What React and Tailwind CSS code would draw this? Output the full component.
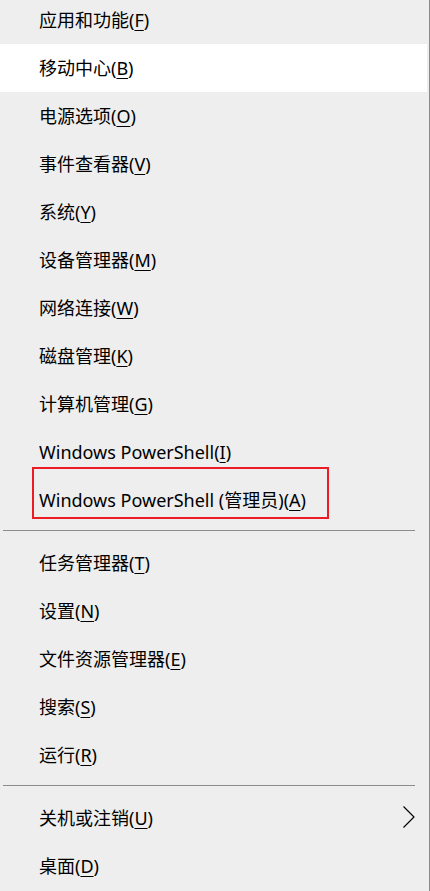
import React from "react";

const FONT = {
  fontFamily: '"Noto Sans", "Noto Sans CJK SC", sans-serif',
};

function Label({ text, k }) {
  return (
    <span>
      {text}(<span className="underline decoration-1 underline-offset-[3px]">{k}</span>)
    </span>
  );
}

function Row({ text, k, active, children }) {
  return (
    <div
      className={
        "relative flex h-[48px] items-center pl-[39px] text-[18px] leading-none text-black " +
        (active ? "mr-[2px] bg-white" : "")
      }
    >
      <Label text={text} k={k} />
      {children}
    </div>
  );
}

function Sep() {
  return (
    <div className="pt-[6px] pb-[8px]">
      <div className="ml-[3px] h-px w-[412px] bg-[#8c8c8c]" />
    </div>
  );
}

export default function App() {
  return (
    <div
      className="h-[891px] w-[430px] overflow-hidden border-r border-[#8a8a8a] bg-[#eeeeee]"
      style={FONT}
    >
      <div className="-mt-[4px]">
        <Row text="应用和功能" k="F" />
        <Row text="移动中心" k="B" active />
        <Row text="电源选项" k="O" />
        <Row text="事件查看器" k="V" />
        <Row text="系统" k="Y" />
        <Row text="设备管理器" k="M" />
        <Row text="网络连接" k="W" />
        <Row text="磁盘管理" k="K" />
        <Row text="计算机管理" k="G" />
        <Row text="Windows PowerShell" k="I" />
        <Row text="Windows PowerShell (管理员)" k="A">
          <div className="pointer-events-none absolute left-[32px] top-[-9px] h-[52px] w-[297px] border-2 border-[#ed1c24]" />
        </Row>
        <Sep />
        <Row text="任务管理器" k="T" />
        <Row text="设置" k="N" />
        <Row text="文件资源管理器" k="E" />
        <Row text="搜索" k="S" />
        <Row text="运行" k="R" />
        <Sep />
        <div className="flex h-[48px] items-center justify-between pl-[39px] pr-[14px] text-[18px] leading-none text-black">
          <Label text="关机或注销" k="U" />
          <svg width="12" height="22" viewBox="0 0 12 22" className="-mt-[3px]">
            <polyline
              points="0.5,0.5 11,11 0.5,21.5"
              fill="none"
              stroke="#000"
              strokeWidth="1.2"
            />
          </svg>
        </div>
        <Row text="桌面" k="D" />
      </div>
    </div>
  );
}
